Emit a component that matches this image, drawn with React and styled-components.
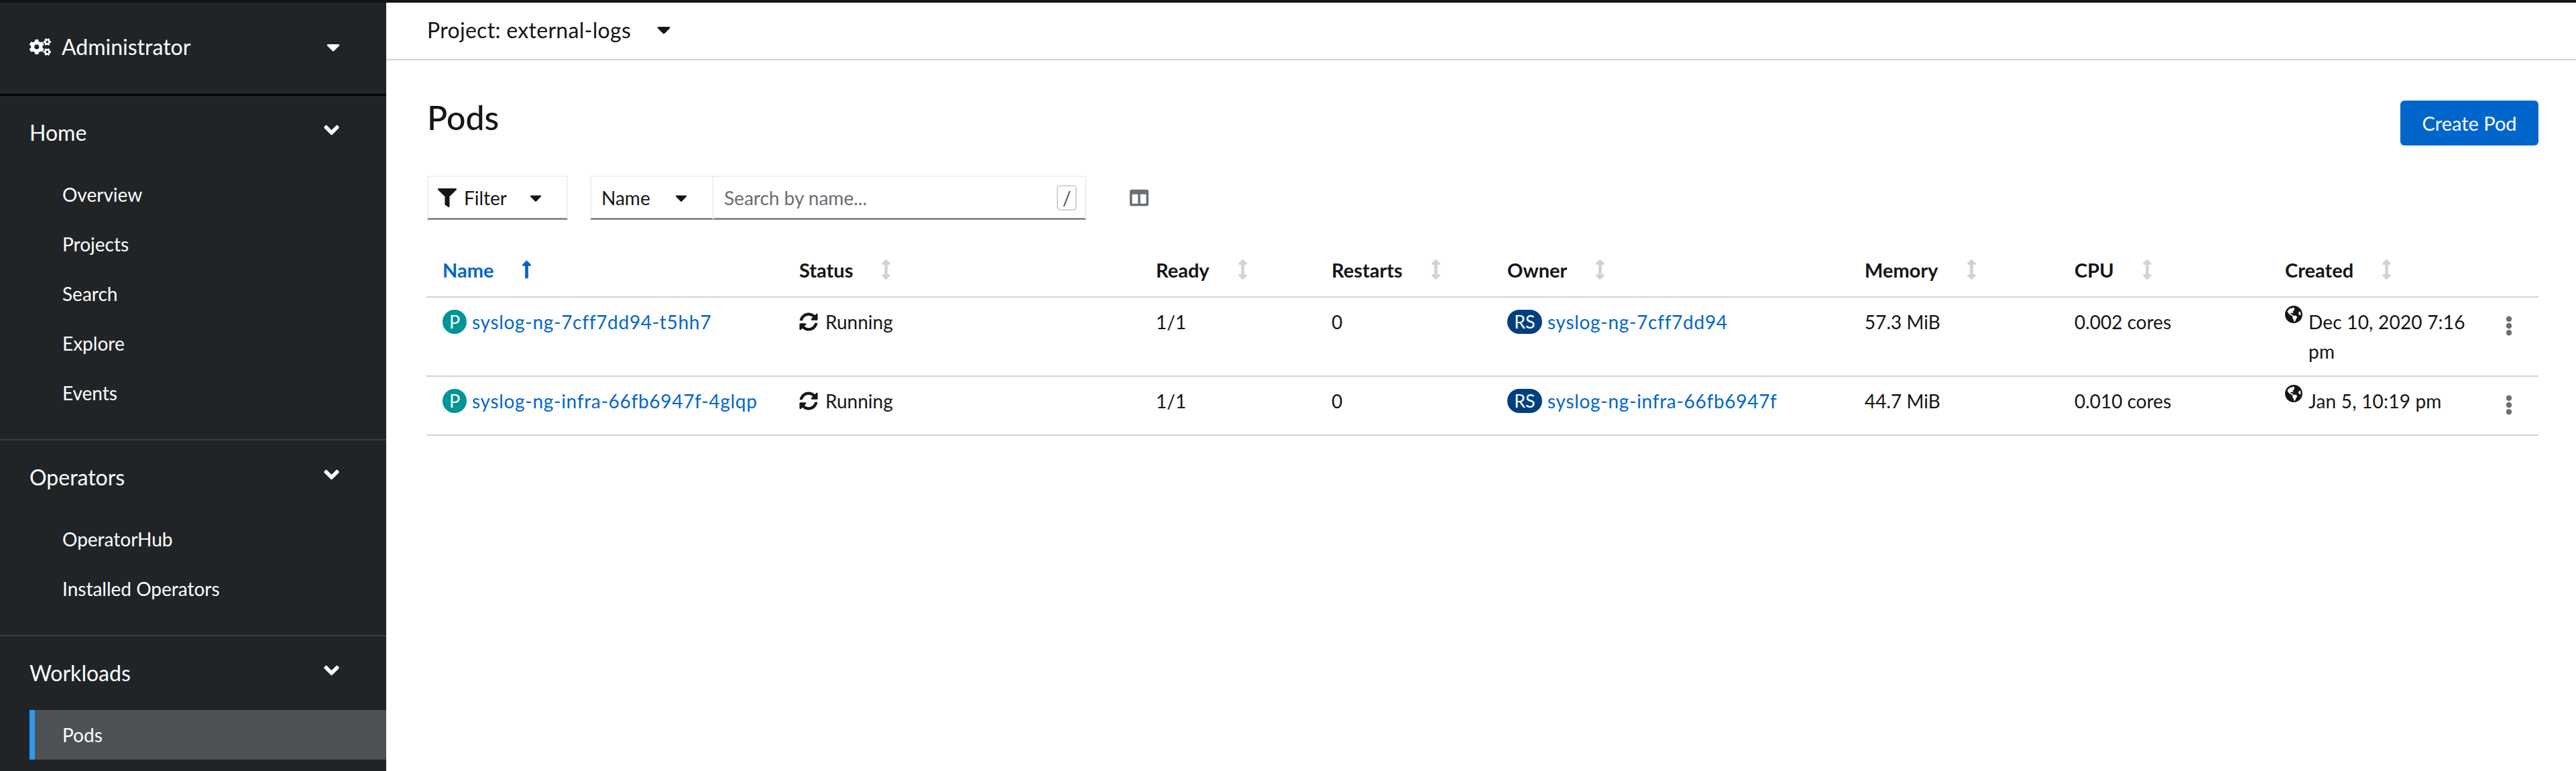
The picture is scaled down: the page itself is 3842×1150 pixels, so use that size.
import React from 'react';
import styled, { createGlobalStyle } from 'styled-components';
import { FaCogs, FaCaretDown, FaAngleDown, FaFilter, FaColumns, FaLongArrowAltUp, FaArrowsAltV, FaSyncAlt, FaGlobeAmericas, FaEllipsisV } from 'react-icons/fa';

const Global = createGlobalStyle`
  html, body { margin: 0; padding: 0; background: #fff; }
  body { font-family: "Lato", "Liberation Sans", sans-serif; color: #151515; }
  * { box-sizing: border-box; }
`;

const Page = styled.div`
  width: 3842px; height: 1150px; overflow: hidden;
  display: flex; flex-direction: column;
`;
const TopStrip = styled.div`height: 4px; background: #151515; flex: none;`;
const Body = styled.div`flex: 1; display: flex; min-height: 0;`;
const Sidebar = styled.nav`
  width: 576px; flex: none; background: #212427; color: #fff; font-size: 32px; overflow: hidden;
`;
const Perspective = styled.div`
  height: 139px; display: flex; align-items: center; padding: 0 68px 5px 44px;
  border-bottom: 3px solid #030303; gap: 16px;
  svg.cogs { width: 32px; height: 26px; }
  span { flex: 1; }
  svg.caret { width: 22px; height: 32px; }
`;
const Group = styled.section`
  padding: 16px 0 ${p => p.$last ? 0 : 32}px;
  border-bottom: ${p => p.$last ? 'none' : '2px solid #3c3f42'};
`;
const GroupHead = styled.div`
  height: 76px; display: flex; align-items: center; justify-content: space-between;
  padding: 0 69px 0 44px;
  svg { width: 25px; height: 36px; margin-top: -6px; }
`;
const Items = styled.div`margin: 18px 0 0 44px;`;
const Item = styled.div`
  height: 74px; display: flex; align-items: center; font-size: 28px;
  padding-left: 49px;
  ${p => p.$active ? 'background: #4f5255; border-left: 8px solid #2b9af3; padding-left: 41px;' : ''}
`;
const Main = styled.main`flex: 1; min-width: 0; display: flex; flex-direction: column;`;
const ProjectBar = styled.div`
  height: 86px; flex: none; border-bottom: 2px solid #d2d2d2; display: flex; align-items: center;
  padding: 0 0 4px 61px; font-size: 32px; letter-spacing: 0.3px;
`;
const Caret = styled(FaCaretDown)`
  width: ${p => p.$w || 20}px; height: ${p => p.$h || 28}px; color: #151515; flex: none;
`;
const ProjectCaret = styled(Caret)`margin-left: 37px; width: 24px; height: 32px;`;
const Content = styled.div`padding: 60px 56px 0 61px;`;
const TitleRow = styled.div`
  height: 67px; display: flex; align-items: center; justify-content: space-between; margin-bottom: 45px;
`;
const Title = styled.h1`margin: -18px 0 0; font-size: 50px; font-weight: 500; line-height: 50px;`;
const Primary = styled.button`
  width: 206px; height: 67px; border: 0; border-radius: 6px; background: #0066cc; color: #fff;
  font: 400 29px "Lato", sans-serif;
`;
const Toolbar = styled.div`height: 66px; display: flex; align-items: stretch;`;
const Box = styled.div`
  display: flex; align-items: center; height: 66px; border: 2px solid #f0f0f0; border-bottom: 3px solid #8a8d90;
  font-size: 28px; color: #151515;
`;
const FilterBox = styled(Box)`
  width: 210px; padding-left: 14px;
  svg.funnel { width: 28px; height: 28px; margin-right: 11px; }
`;
const NameBox = styled(Box)`
  width: 184px; margin-left: 33px; padding-left: 15px; justify-content: flex-start;
`;
const NameCaret = styled(Caret)`margin-left: 36px;`;
const FilterCaret = styled(Caret)`margin-left: 33px;`;
const SearchBox = styled(Box)`
  width: 556px; padding: 0 12px 0 16px; border-left: 0; color: #6a6e73; justify-content: space-between;
`;
const Kbd = styled.kbd`
  width: 30px; height: 38px; border: 2px solid #d2d2d2; border-radius: 5px; color: #4f5255;
  font: 400 28px "Lato", sans-serif; display: flex; align-items: center; justify-content: center;
`;
const ColumnsBtn = styled.div`
  margin-left: 64px; display: flex; align-items: center; color: #6a6e73;
  svg { width: 30px; height: 28px; }
`;
const Table = styled.table`
  width: 3150px; margin: 40px 0 0 -1px; border-collapse: collapse; table-layout: fixed; font-size: 28px;
`;
const Th = styled.th`
  height: 75px; padding: 0 24px 6px; text-align: left; font-weight: 700; font-size: 29px; border-bottom: 2px solid #d2d2d2;
  color: ${p => p.$active ? '#0066cc' : '#151515'}; white-space: nowrap;
`;
const ThInner = styled.div`display: flex; align-items: center;`;
const SortIcon = styled.span`
  margin-left: 42px; display: inline-flex; color: ${p => p.$active ? '#0066cc' : '#d2d2d2'};
  svg { width: 15px; height: 30px; }
`;
const Td = styled.td`
  padding: 14px 24px; vertical-align: top; line-height: 44px; height: 88px; border-bottom: 2px solid #d2d2d2;
`;
const ResCell = styled.div`display: flex; align-items: center; white-space: nowrap;`;
const Badge = styled.span`
  display: inline-flex; align-items: center; justify-content: center; height: 36px; border-radius: 18px;
  min-width: ${p => p.$kind === 'RS' ? 52 : 36}px; color: #fff; font-size: 27px; margin-right: 8px; flex: none;
  background: ${p => p.$kind === 'RS' ? '#004080' : '#009596'};
`;
const LinkText = styled.a`color: #0066cc; text-decoration: none; letter-spacing: 0.7px;`;
const StatusCell = styled.div`
  display: flex; align-items: center; gap: 11px;
  svg { width: 28px; height: 28px; }
`;
const DateCell = styled.div`
  display: flex; align-items: flex-start; gap: 9px; margin-right: -24px; letter-spacing: 0.2px;
  svg { width: 26px; height: 28px; flex: none; margin-top: -3px; }
`;
const KebabCell = styled(Td)`
  padding: 27px 0 0 46px;
  svg { display: block; width: 12px; height: 30px; color: #6a6e73; }
`;

const nav = [
  { head: 'Home', items: ['Overview', 'Projects', 'Search', 'Explore', 'Events'] },
  { head: 'Operators', items: ['OperatorHub', 'Installed Operators'] },
  { head: 'Workloads', items: ['Pods'], last: true },
];
const cols = [532, 532, 262, 262, 533, 313, 314, 306, 96];
const heads = ['Name', 'Status', 'Ready', 'Restarts', 'Owner', 'Memory', 'CPU', 'Created'];
const rows = [
  { name: 'syslog-ng-7cff7dd94-t5hh7', owner: 'syslog-ng-7cff7dd94', mem: '57.3 MiB', cpu: '0.002 cores', date: 'Dec 10, 2020 7:16 pm' },
  { name: 'syslog-ng-infra-66fb6947f-4glqp', owner: 'syslog-ng-infra-66fb6947f', mem: '44.7 MiB', cpu: '0.010 cores', date: 'Jan 5, 10:19 pm' },
];

export default function App() {
  return (
    <Page>
      <Global />
      <TopStrip />
      <Body>
        <Sidebar>
          <Perspective>
            <FaCogs className="cogs" />
            <span>Administrator</span>
            <FaCaretDown className="caret" />
          </Perspective>
          {nav.map(g => (
            <Group key={g.head} $last={g.last}>
              <GroupHead>{g.head}<FaAngleDown /></GroupHead>
              <Items>
                {g.items.map(i => <Item key={i} $active={i === 'Pods'}>{i}</Item>)}
              </Items>
            </Group>
          ))}
        </Sidebar>
        <Main>
          <ProjectBar>Project: external-logs<ProjectCaret /></ProjectBar>
          <Content>
            <TitleRow>
              <Title>Pods</Title>
              <Primary>Create Pod</Primary>
            </TitleRow>
            <Toolbar>
              <FilterBox><FaFilter className="funnel" />Filter<FilterCaret /></FilterBox>
              <NameBox>Name<NameCaret /></NameBox>
              <SearchBox>Search by name...<Kbd>/</Kbd></SearchBox>
              <ColumnsBtn><FaColumns /></ColumnsBtn>
            </Toolbar>
            <Table>
              <colgroup>{cols.map((w, i) => <col key={i} style={{ width: w }} />)}</colgroup>
              <thead>
                <tr>
                  {heads.map((h, i) => (
                    <Th key={h} $active={i === 0}>
                      <ThInner>{h}<SortIcon $active={i === 0}>{i === 0 ? <FaLongArrowAltUp /> : <FaArrowsAltV />}</SortIcon></ThInner>
                    </Th>
                  ))}
                  <Th />
                </tr>
              </thead>
              <tbody>
                {rows.map(r => (
                  <tr key={r.name}>
                    <Td><ResCell><Badge $kind="P">P</Badge><LinkText>{r.name}</LinkText></ResCell></Td>
                    <Td><StatusCell><FaSyncAlt />Running</StatusCell></Td>
                    <Td>1/1</Td>
                    <Td>0</Td>
                    <Td><ResCell><Badge $kind="RS">RS</Badge><LinkText>{r.owner}</LinkText></ResCell></Td>
                    <Td>{r.mem}</Td>
                    <Td>{r.cpu}</Td>
                    <Td><DateCell><FaGlobeAmericas /><span>{r.date}</span></DateCell></Td>
                    <KebabCell><FaEllipsisV /></KebabCell>
                  </tr>
                ))}
              </tbody>
            </Table>
          </Content>
        </Main>
      </Body>
    </Page>
  );
}
